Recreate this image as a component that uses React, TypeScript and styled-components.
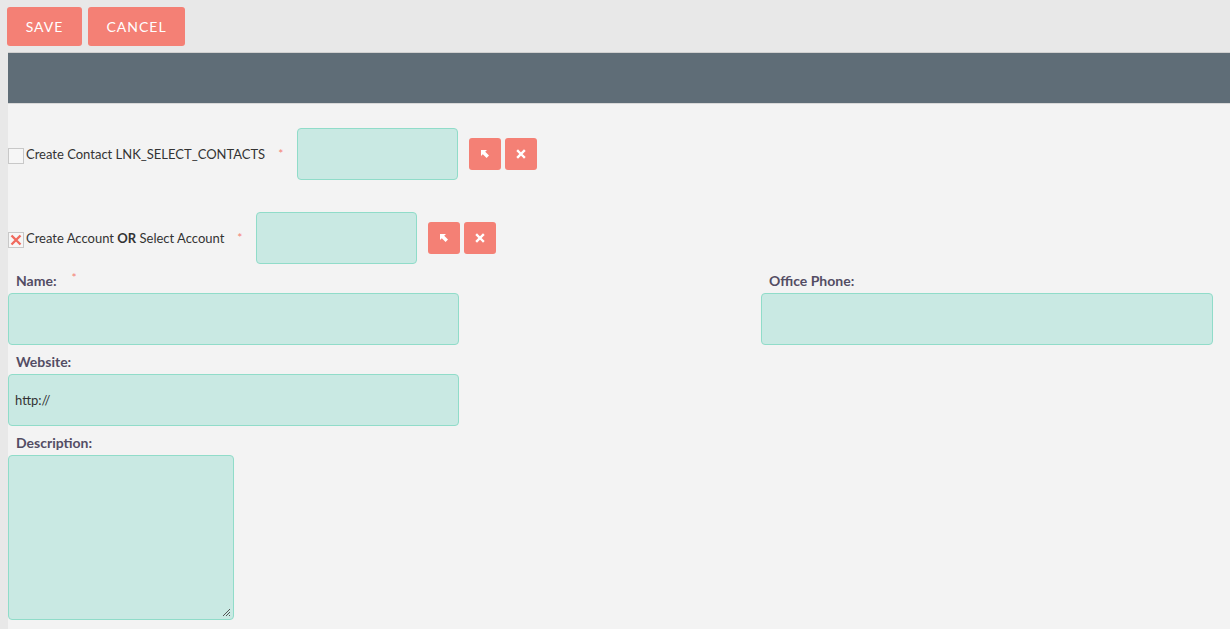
import styled, { createGlobalStyle } from "styled-components";

const GlobalStyle = createGlobalStyle`
    html, body {
        margin: 0;
        padding: 0;
        background: #e8e8e8;
        font-family: Lato, "Open Sans", sans-serif;
    }
`

const Page = styled.div`
    width: 1230px;
    height: 629px;
    overflow: hidden;
    background: #e8e8e8;
`

const ActionBar = styled.div`
    display: flex;
    gap: 6px;
    padding: 7px 0 6px 7px;
`

const ActionButton = styled.button<{ $w: number }>`
    width: ${p => p.$w}px;
    height: 39px;
    border: none;
    border-radius: 3px;
    background: #f48075;
    color: #fff;
    font-family: Lato, sans-serif;
    font-size: 14px;
    letter-spacing: 1px;
    padding: 0;
`

const Panel = styled.div`
    margin-left: 8px;
    background: #f3f3f3;
    height: 577px;
`

const PanelHeader = styled.div`
    height: 50px;
    background: #5f6d77;
    border-top: 1px solid #d0d0d0;
    border-bottom: 1px solid #d8d8d8;
`

const Body = styled.div`
    padding-top: 24px;
`

const CheckRow = styled.div<{ $gap: number }>`
    display: flex;
    align-items: center;
    height: 52px;
    margin-bottom: ${p => p.$gap}px;
`

const CheckBox = styled.span`
    width: 14px;
    height: 14px;
    border: 1px solid #c8c8c8;
    background: #f6f6f6;
    display: flex;
    align-items: center;
    justify-content: center;
    margin-right: 2px;
    position: relative;
    top: 2px;
`

const CheckText = styled.span`
    font-size: 13px;
    color: #333;
    b {
        font-weight: 700;
    }
`

const Star = styled.span`
    color: #f48075;
    font-size: 12px;
    margin: 18px 14px 0 13px;
    align-self: flex-start;
`

const Input = styled.div<{ $w: number; $h?: number }>`
    width: ${p => p.$w}px;
    height: ${p => p.$h ?? 52}px;
    box-sizing: border-box;
    background: #c9e9e3;
    border: 1px solid #90dcc9;
    border-radius: 4px;
    display: flex;
    align-items: center;
    padding-left: 6px;
    font-size: 13px;
    color: #333;
    position: relative;
`

const ButtonGroup = styled.div`
    display: flex;
    gap: 4px;
    margin-left: 11px;
`

const IconButton = styled.span`
    width: 32px;
    height: 32px;
    border-radius: 3px;
    background: #f48075;
    display: flex;
    align-items: center;
    justify-content: center;
`

const Grid = styled.div`
    display: grid;
    grid-template-columns: 753px 452px;
    row-gap: 5px;
`

const Field = styled.div`
    display: flex;
    flex-direction: column;
`

const Label = styled.div`
    font-size: 14px;
    font-weight: 700;
    color: #534d64;
    padding-left: 8px;
    height: 24px;
    line-height: 24px;
    display: flex;
`

const LabelStar = styled.span`
    color: #f48075;
    font-weight: 400;
    font-size: 12px;
    margin-left: 15px;
    line-height: 18px;
`

const Grip = styled.svg`
    position: absolute;
    right: 2px;
    bottom: 2px;
`

const SelectIcon = () => (
    <svg width="10" height="10" viewBox="0 0 10 10">
        <path d="M1 1 L7 1 L5.2 2.8 L9 6.6 L6.6 9 L2.8 5.2 L1 7 Z" fill="#fff" />
    </svg>
)

const ClearIcon = () => (
    <svg width="10" height="10" viewBox="0 0 10 10">
        <path d="M2 2 L8 8 M8 2 L2 8" stroke="#fff" strokeWidth="2.4" strokeLinecap="square" />
    </svg>
)

const CheckedMark = () => (
    <svg width="12" height="12" viewBox="0 0 12 12">
        <path d="M1.5 1.5 L10.5 10.5 M10.5 1.5 L1.5 10.5" stroke="#f06a5e" strokeWidth="2.4" />
    </svg>
)

const RelateButtons = () => (
    <ButtonGroup>
        <IconButton><SelectIcon /></IconButton>
        <IconButton><ClearIcon /></IconButton>
    </ButtonGroup>
)

export default function App() {
    return (
        <Page>
            <GlobalStyle />
            <ActionBar>
                <ActionButton $w={75}>SAVE</ActionButton>
                <ActionButton $w={97}>CANCEL</ActionButton>
            </ActionBar>
            <Panel>
                <PanelHeader />
                <Body>
                    <CheckRow $gap={32}>
                        <CheckBox />
                        <CheckText>Create Contact LNK_SELECT_CONTACTS</CheckText>
                        <Star>*</Star>
                        <Input $w={161} />
                        <RelateButtons />
                    </CheckRow>
                    <CheckRow $gap={5}>
                        <CheckBox><CheckedMark /></CheckBox>
                        <CheckText>Create Account <b>OR</b> Select Account</CheckText>
                        <Star>*</Star>
                        <Input $w={161} />
                        <RelateButtons />
                    </CheckRow>
                    <Grid>
                        <Field>
                            <Label>Name:<LabelStar>*</LabelStar></Label>
                            <Input $w={451} />
                        </Field>
                        <Field>
                            <Label>Office Phone:</Label>
                            <Input $w={452} />
                        </Field>
                        <Field>
                            <Label>Website:</Label>
                            <Input $w={451}>http://</Input>
                        </Field>
                        <div />
                        <Field>
                            <Label>Description:</Label>
                            <Input $w={226} $h={165}>
                                <Grip width="9" height="9" viewBox="0 0 9 9">
                                    <path d="M1 8 L8 1 M4 8 L8 4 M7 8 L8 7" stroke="#555" strokeWidth="1" />
                                </Grip>
                            </Input>
                        </Field>
                    </Grid>
                </Body>
            </Panel>
        </Page>
    )
}
